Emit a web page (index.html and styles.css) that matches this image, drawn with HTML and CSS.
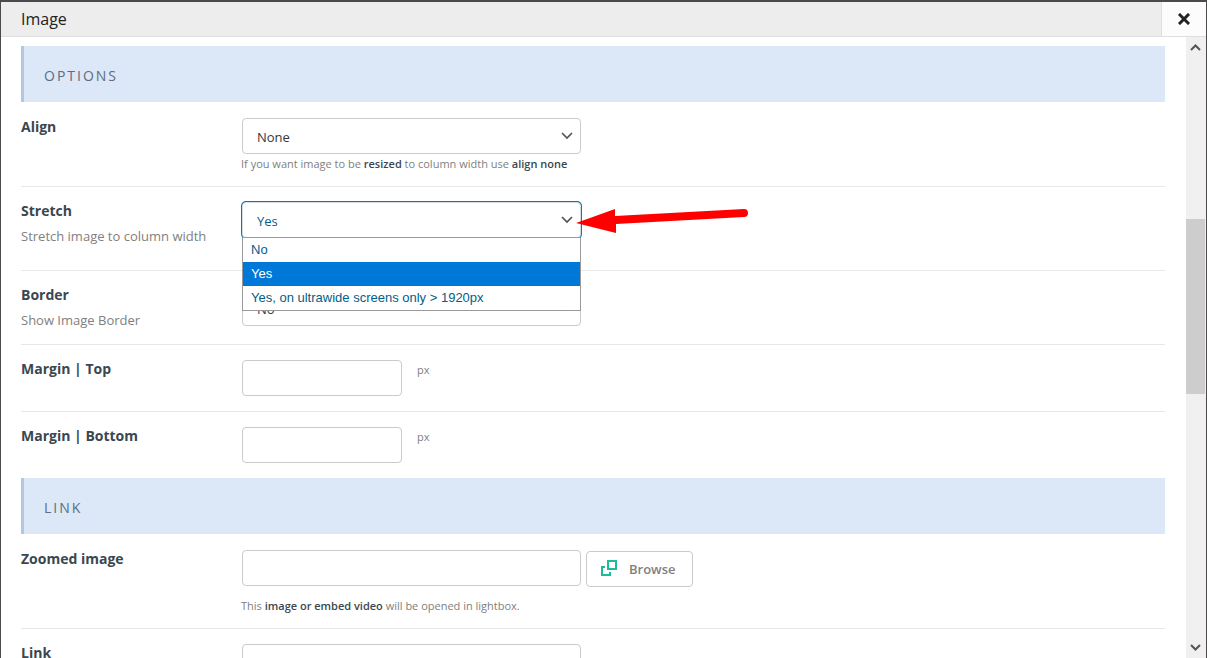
FILE: index.html
```html
<!DOCTYPE html>
<html lang="en">
<head>
<meta charset="utf-8">
<title>Image</title>
<link rel="stylesheet" href="styles.css">
</head>
<body>
<main class="modal">
  <header class="modal-header">
    <h1 class="modal-title">Image</h1>
    <button class="close" type="button" aria-label="Close">
      <svg width="12" height="12" viewBox="0 0 12 12"><path d="M2 2L10 10M10 2L2 10" stroke="#222" stroke-width="3" stroke-linecap="square"/></svg>
    </button>
  </header>
  <div class="modal-body">
    <form class="content">
      <h2 class="section">OPTIONS</h2>
      <div class="row row-tall">
        <div class="caption"><label class="name" for="align">Align</label></div>
        <div class="field">
          <div class="select-wrap">
            <select class="control" id="align"><option>None</option></select>
            <svg class="chevron" width="12" height="8" viewBox="0 0 12 8"><path d="M1 1L6 6L11 1" fill="none" stroke="#555" stroke-width="1.7"/></svg>
          </div>
          <p class="help">If you want image to be <strong>resized</strong> to column width use <strong>align none</strong></p>
        </div>
      </div>
      <div class="row row-tall">
        <div class="caption"><label class="name" for="stretch">Stretch</label><p class="desc">Stretch image to column width</p></div>
        <div class="field">
          <div class="select-wrap">
            <select class="control active" id="stretch"><option>No</option><option selected>Yes</option><option>Yes, on ultrawide screens only &gt; 1920px</option></select>
            <svg class="chevron" width="12" height="8" viewBox="0 0 12 8"><path d="M1 1L6 6L11 1" fill="none" stroke="#555" stroke-width="1.7"/></svg>
            <ul class="menu" role="listbox" aria-label="Stretch">
              <li class="option" role="option">No</li>
              <li class="option selected" role="option" aria-selected="true">Yes</li>
              <li class="option" role="option">Yes, on ultrawide screens only &gt; 1920px</li>
            </ul>
            <svg class="arrow" width="172" height="28" viewBox="0 0 172 28"><path d="M0 16L39 2V9L168 2A4 4 0 0 1 168 10L40 17V26Z" fill="#f00"/></svg>
          </div>
        </div>
      </div>
      <div class="row">
        <div class="caption"><label class="name" for="border">Border</label><p class="desc">Show Image Border</p></div>
        <div class="field field-middle">
          <div class="select-wrap">
            <select class="control" id="border"><option>No</option></select>
            <svg class="chevron" width="12" height="8" viewBox="0 0 12 8"><path d="M1 1L6 6L11 1" fill="none" stroke="#555" stroke-width="1.7"/></svg>
          </div>
        </div>
      </div>
      <div class="row">
        <div class="caption"><label class="name" for="mt">Margin | Top</label></div>
        <div class="field field-inline"><input class="control short" id="mt" type="text"><span class="unit">px</span></div>
      </div>
      <div class="row row-last">
        <div class="caption"><label class="name" for="mb">Margin | Bottom</label></div>
        <div class="field field-inline"><input class="control short" id="mb" type="text"><span class="unit">px</span></div>
      </div>
      <h2 class="section">LINK</h2>
      <div class="row">
        <div class="caption"><label class="name" for="zoomed">Zoomed image</label></div>
        <div class="field">
          <div class="browse-line">
            <input class="control" id="zoomed" type="text">
            <button class="browse" type="button">
              <svg class="browse-icon" width="16" height="16" viewBox="0 0 16 16" fill="none" stroke="#1abc9c" stroke-width="2"><path d="M7 1H15V9H7ZM4 7H1V15H9V12"/></svg>
              Browse
            </button>
          </div>
          <p class="help help-spaced">This <strong>image or embed video</strong> will be opened in lightbox.</p>
        </div>
      </div>
      <div class="row">
        <div class="caption"><label class="name" for="link">Link</label></div>
        <div class="field"><input class="control" id="link" type="text"></div>
      </div>
    </form>
    <div class="scrollbar" aria-hidden="true">
      <svg class="scroll-end" viewBox="0 0 20 20"><path d="M5 13L9.500 8.500L14 13" fill="none" stroke="#555" stroke-width="2"/></svg>
      <div class="track-before"></div>
      <div class="thumb"></div>
      <div class="track-after"></div>
      <svg class="scroll-end" viewBox="0 0 20 20"><path d="M5 7L9.500 11.500L14 7" fill="none" stroke="#555" stroke-width="2"/></svg>
    </div>
  </div>
</main>
</body>
</html>
```
FILE: styles.css
```css
* {
  box-sizing: border-box;
}

body {
  margin: 0;
  background: #fff;
  color: #3b4750;
  font-family: "Open Sans", "Noto Sans", sans-serif;
  font-size: 13px;
}

h1, h2, p, ul {
  margin: 0;
  padding: 0;
}

.modal {
  display: flex;
  flex-direction: column;
  height: 100vh;
  overflow: hidden;
  border: 1px solid #4b4949;
  border-top-width: 2px;
  border-bottom: 0;
}

.modal-header {
  display: flex;
  flex: none;
  height: 35px;
  background: #ededed;
  border-bottom: 1px solid #dfdfdf;
}

.modal-title {
  flex: 1;
  padding-left: 20px;
  color: #222;
  font-size: 16px;
  font-weight: 400;
  line-height: 34px;
}

.close {
  display: flex;
  align-items: center;
  justify-content: center;
  width: 45px;
  padding: 0;
  background: #fcfcfc;
  border: 0;
  border-left: 1px solid #dfdfdf;
}

.modal-body {
  display: flex;
  flex: 1;
  min-height: 0;
}

.content {
  flex: 1;
  padding: 9px 21px 0 20px;
  overflow: hidden;
}

.section {
  height: 56px;
  padding-left: 20px;
  background: #dce7f7;
  border-left: 3px solid #b4c6e3;
  color: #5b6e80;
  font-size: 14px;
  font-weight: 400;
  letter-spacing: 2px;
  line-height: 60px;
}

.row {
  display: grid;
  grid-template-columns: 221px 1fr;
  padding: 15px 0;
  border-bottom: 1px solid #e8e8e8;
}

.section + .row {
  padding-top: 16px;
}

.row-tall {
  min-height: 84px;
}

.row-last {
  border-bottom: 0;
}

.name {
  display: block;
  font-size: 14px;
  font-weight: 700;
  line-height: 18px;
}

.desc {
  padding-top: 7px;
  color: #808080;
  line-height: 18px;
}

.field-middle {
  align-self: center;
}

.field-inline {
  display: flex;
  gap: 15px;
}

.select-wrap {
  position: relative;
  width: 339px;
}

.control {
  display: block;
  width: 339px;
  height: 36px;
  margin: 0;
  padding: 2px 14px 0;
  appearance: none;
  background: #fff;
  border: 1px solid #c9cacc;
  border-radius: 4px;
  color: #32373c;
  font: inherit;
}

.short {
  width: 160px;
}

.active {
  border-color: #d3dde2;
  box-shadow: 0 0 0 1px #007cba;
  color: #016087;
}

.chevron {
  position: absolute;
  top: 14px;
  right: 8px;
}

.menu {
  position: absolute;
  z-index: 2;
  top: 35px;
  left: 0;
  width: 100%;
  background: #fff;
  border: 1px solid #999;
  color: #016087;
  font-family: "Liberation Sans", Arial, sans-serif;
  list-style: none;
}

.option {
  padding-left: 8px;
  line-height: 24px;
}

.selected {
  background: #0078d7;
  color: #fff;
}

.arrow {
  position: absolute;
  z-index: 3;
  top: 5px;
  left: 334px;
}

.help {
  margin-left: -1px;
  padding-top: 2px;
  color: #808080;
  font-size: 11px;
  line-height: 15px;
}

.help strong {
  color: #3b4750;
  font-weight: 600;
}

.help-spaced {
  padding-top: 11px;
}

.unit {
  color: #808080;
  font-size: 11px;
  line-height: 20px;
}

.browse-line {
  display: flex;
  align-items: flex-end;
  gap: 5px;
  height: 37px;
}

.browse-line .control {
  align-self: flex-start;
}

.browse {
  display: flex;
  align-items: center;
  gap: 12px;
  height: 36px;
  padding: 0 16px 0 14px;
  background: #fff;
  border: 1px solid #c9cacc;
  border-radius: 4px;
  color: #808080;
  font: inherit;
  font-weight: 600;
}

.browse-icon {
  margin-bottom: 2px;
}

.scrollbar {
  display: flex;
  flex: none;
  flex-direction: column;
  width: 20px;
  padding-right: 1px;
  background: #f0f0f0;
}

.scroll-end {
  flex: none;
  width: 20px;
  height: 20px;
}

.track-before {
  flex: 162;
}

.thumb {
  flex: 175;
  background: #cdcdcd;
}

.track-after {
  flex: 244;
}
```
